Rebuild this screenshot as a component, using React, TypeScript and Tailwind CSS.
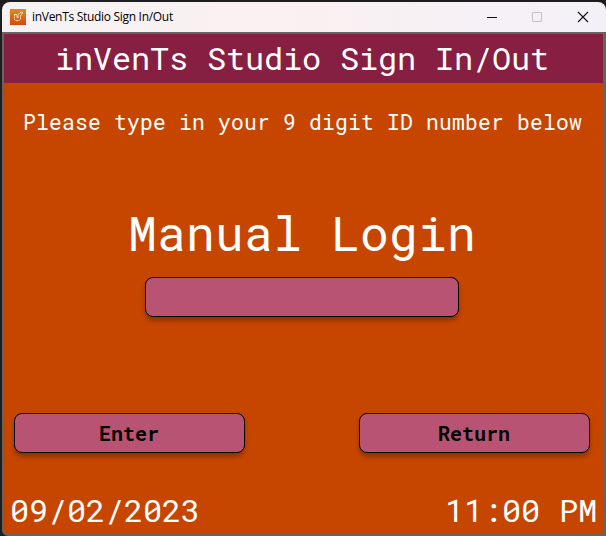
function TitleBar() {
  return (
    <div className="flex h-[30px] items-center rounded-t-lg bg-gradient-to-r from-[#f6f2f3] via-[#f9f0f1] to-[#f3f1f8] pl-2 text-black">
      <svg width="16" height="16" viewBox="0 0 16 16" className="shrink-0">
        <defs>
          <linearGradient id="tile" x1="0" y1="0" x2="0" y2="1">
            <stop offset="0" stopColor="#e08a20" />
            <stop offset="1" stopColor="#d5480c" />
          </linearGradient>
        </defs>
        <rect width="16" height="16" fill="url(#tile)" />
        <g fill="none" stroke="#fff0d8" strokeWidth="0.9">
          <path d="M4.5 5v5.5l1.5 1.2h3l1.5-1.7V6.5" strokeDasharray="2 .5" />
          <path d="M5 5.5h2v4M8 9V5.5L10.5 4M10 3.5l2.5-.5-.5 2.5-1.5 1" strokeDasharray="2 .5" />
        </g>
      </svg>
      <span className="ml-[6px] whitespace-nowrap font-['Open_Sans','Noto_Sans',sans-serif] text-[12px] leading-[16px] tracking-[-0.3px]">
        inVenTs Studio Sign In/Out
      </span>
      <div className="ml-auto flex items-center pb-px pr-[17px]">
        <svg width="102" height="12" viewBox="0 0 102 12" fill="none">
          <path d="M0 6.5h10" stroke="#111" />
          <rect x="45.5" y="1.5" width="9" height="9" rx="0.5" stroke="#c6c1c4" />
          <path d="m91 1 10 10M101 1 91 11" stroke="#111" strokeWidth="1.1" />
        </svg>
      </div>
    </div>
  );
}

function Button({ label }: { label: string }) {
  return (
    <button className="h-10 w-[231px] rounded-lg border border-black bg-[#b95374] pr-px text-[20px] font-bold leading-[38px] text-black shadow-[0_4px_4px_rgba(0,0,0,0.25)]">
      {label}
    </button>
  );
}

export default function App() {
  return (
    <div className="h-[536px] w-[606px] overflow-hidden bg-[#1e1e20] pl-[2px] pt-[2px]">
      <TitleBar />
      <div className="flex h-[504px] w-[604px] flex-col rounded-bl-md border-2 border-[#666361] bg-[#c64600] font-['Roboto_Mono','Noto_Sans_Mono',monospace] text-white">
        <header className="mr-px h-[49px] whitespace-nowrap bg-[#861f41] pl-[51px] text-[32px] leading-[47px] tracking-[-0.2px]">
          inVenTs Studio Sign In/Out
        </header>
        <p className="mt-[25px] whitespace-nowrap pl-[19px] text-[21.33px] leading-[28px] tracking-[0.2px]">
          Please type in your 9 digit ID number below
        </p>
        <h1 className="mt-[65px] whitespace-nowrap pl-[124px] text-[48px] leading-[63px] tracking-[0.2px]">Manual Login</h1>
        <input
          aria-label="ID number"
          className="ml-[141px] mt-[13px] h-10 w-[314px] rounded-lg border border-black bg-[#b95374] shadow-[0_4px_4px_rgba(0,0,0,0.25)] outline-none"
        />
        <div className="mt-24 flex justify-between pl-[10px] pr-[14px]">
          <Button label="Enter" />
          <Button label="Return" />
        </div>
        <footer className="mt-[36px] flex justify-between whitespace-nowrap pl-[6px] pr-[7px] text-[32px] leading-[42px] tracking-[-0.2px]">
          <span>09/02/2023</span>
          <span>11:00 PM</span>
        </footer>
      </div>
    </div>
  );
}
